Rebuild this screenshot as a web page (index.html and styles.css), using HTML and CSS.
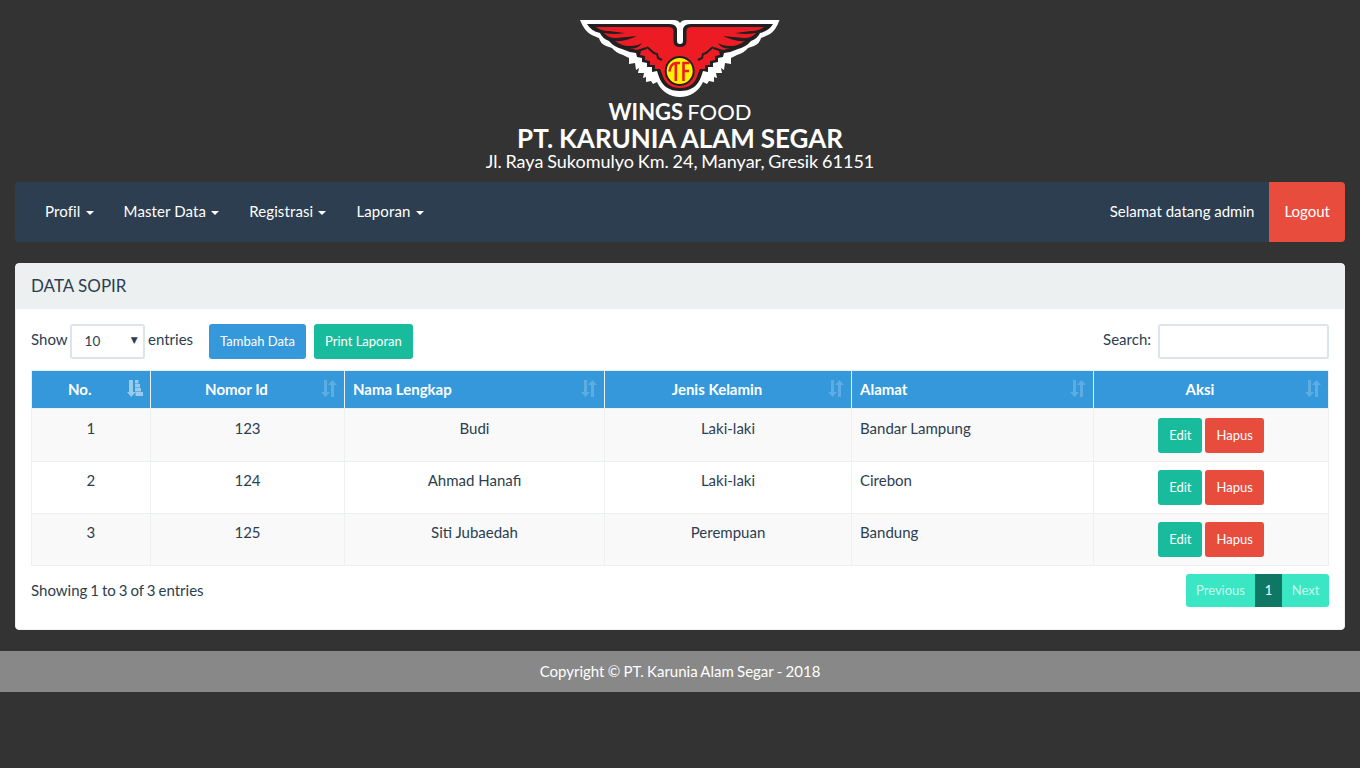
FILE: index.html
```html
<!DOCTYPE html>
<html lang="id">
<head>
<meta charset="utf-8">
<title>Data Sopir</title>
<link rel="stylesheet" href="styles.css">
</head>
<body>
<svg width="0" height="0" class="defs">
  <symbol id="sort" viewBox="0 0 16 17"><path d="M3 0h3v12h3l-4.500 5L0 12h3zM10 17V5H7l4.500-5L16 5h-3v12z"/></symbol>
  <symbol id="sort-asc" viewBox="0 0 16 17"><path d="M2 0h4v12h2.500L4.300 17 0 12h2zM8 0h3.500v3.600H8zM8 4h5v3.600H8zM8 8h6v3.600H8zM8.500 12H16v4H8.500z"/></symbol>
</svg>
<header class="brand">
  <svg class="logo" viewBox="0 0 200 77" width="200" height="77">
    <path fill="#fff" d="M0 0H94Q98 0 100 3Q102 0 106 0H199.500Q196 10 190 14Q184 17 181 18Q180 23 174 26L168 28Q164 33 157 35L151 38V44L145 43L144 50L141 48L142 53L136 53L137 58L134 57V62L129 61L127 64L123 62C119 71 110 77 100 77S81 71 77 62L73 64L71 61L66 62V57L63 58L64 53L58 53L59 48L56 50L55 43L49 44V38L43 35Q36 33 32 28L26 26Q20 23 19 18Q16 17 10 14Q4 10 0 0Z"/>
    <g id="wings">
      <path fill="#231f20" d="M100 24Q97 24 97 21V9Q96 4 89 4H7Q11 11 20 13Q22 18 29 21Q34 27 42 29Q48 32 56 33L57 37L62 38L62 42L67 43L67 47L72 47L72 52L77 51L79 57Q84 71 100 71Z"/>
      <path fill="#ed1c24" d="M100 27Q93.500 27 93.500 21V11Q93.500 7 88 7H16Q21 11 29 11L45 13Q34 15 24 13Q28 18 36 18L57 16Q45 22 35 21Q42 26 49 26Q58 26 62 23Q58 30 49 28L57 30L66 27L67 29L61 31L60 35L65 36L65 40L70 41L70 45L75 45L75 49L80 49L82 54Q86 68 100 68Z"/>
      <path fill="none" stroke="#231f20" stroke-width="2" d="M67 27L74 33L77 34L78 38L82 40"/>
    </g>
    <use href="#wings" transform="matrix(-1 0 0 1 200 0)"/>
    <circle cx="99.700" cy="51" r="14" fill="#fff200" stroke="#231f20" stroke-width="2"/>
    <path d="M89.500 51.500Q90.500 43.500 96 43H100M95.800 43V61M103.500 61V43H109.500M103.500 51H109" fill="none" stroke="#ed1c24" stroke-width="2.600"/>
  </svg>
  <div class="line-brand"><b>WINGS</b> FOOD</div>
  <div class="line-company">PT. KARUNIA ALAM SEGAR</div>
  <div class="line-address">Jl. Raya Sukomulyo Km. 24, Manyar, Gresik 61151</div>
</header>
<nav class="navbar">
  <a class="nav-link menu">Profil <i class="caret"></i></a>
  <a class="nav-link menu">Master Data <i class="caret"></i></a>
  <a class="nav-link menu">Registrasi <i class="caret"></i></a>
  <a class="nav-link menu">Laporan <i class="caret"></i></a>
  <span class="nav-link welcome">Selamat datang admin</span>
  <a class="nav-link logout">Logout</a>
</nav>
<main class="panel">
  <div class="panel-heading">DATA SOPIR</div>
  <div class="panel-body">
    <div class="toolbar">
      <span class="label">Show</span>
      <span class="length">10<i>▼</i></span>
      <span class="label">entries</span>
      <a class="btn blue add">Tambah Data</a>
      <a class="btn green print">Print Laporan</a>
      <label class="search label" for="search">Search:</label>
      <input id="search" class="search-input" type="text">
    </div>
    <table class="grid">
      <colgroup><col class="c1"><col class="c2"><col class="c3"><col class="c4"><col class="c5"><col class="c6"></colgroup>
      <thead>
        <tr>
          <th>No.<svg class="sort active"><use href="#sort-asc"/></svg></th>
          <th>Nomor Id<svg class="sort"><use href="#sort"/></svg></th>
          <th class="left">Nama Lengkap<svg class="sort"><use href="#sort"/></svg></th>
          <th>Jenis Kelamin<svg class="sort"><use href="#sort"/></svg></th>
          <th class="left">Alamat<svg class="sort"><use href="#sort"/></svg></th>
          <th>Aksi<svg class="sort"><use href="#sort"/></svg></th>
        </tr>
      </thead>
      <tbody>
        <tr><td>1</td><td>123</td><td>Budi</td><td>Laki-laki</td><td class="left">Bandar Lampung</td><td><div class="actions"><a class="btn green">Edit</a><a class="btn red">Hapus</a></div></td></tr>
        <tr><td>2</td><td>124</td><td>Ahmad Hanafi</td><td>Laki-laki</td><td class="left">Cirebon</td><td><div class="actions"><a class="btn green">Edit</a><a class="btn red">Hapus</a></div></td></tr>
        <tr><td>3</td><td>125</td><td>Siti Jubaedah</td><td>Perempuan</td><td class="left">Bandung</td><td><div class="actions"><a class="btn green">Edit</a><a class="btn red">Hapus</a></div></td></tr>
      </tbody>
    </table>
    <div class="table-foot">
      <span class="info">Showing 1 to 3 of 3 entries</span>
      <div class="pages"><a class="prev">Previous</a><a class="current">1</a><a class="next">Next</a></div>
    </div>
  </div>
</main>
<footer class="footer">Copyright © PT. Karunia Alam Segar - 2018</footer>
</body>
</html>
```
FILE: styles.css
```css
* { box-sizing: border-box; }
body { margin: 0; background: #333; color: #2c3e50; font: 15px/21px Lato, sans-serif; }
.defs { display: none; }

.brand { height: 182px; padding-top: 20px; display: flex; flex-direction: column; align-items: center; color: #fff; white-space: nowrap; }
.logo { display: block; flex: none; }
.line-brand { font-size: 22px; line-height: 29px; word-spacing: -1.5px; }
.line-company { font-size: 26px; line-height: 24px; font-weight: 700; word-spacing: -.5px; }
.line-address { font-size: 18px; line-height: 22px; word-spacing: -.8px; }

.navbar { display: flex; height: 60px; margin: 0 15px 21px; padding-left: 15px; background: #2c3e50; border-radius: 4px; overflow: hidden; }
.nav-link { padding: 19px 15px; color: #fff; white-space: nowrap; }
.menu { letter-spacing: .1px; }
.caret { display: inline-block; margin-left: 1.3px; vertical-align: middle; border-top: 4px solid #fff; border-left: 4px solid transparent; border-right: 4px solid transparent; }
.welcome { margin-left: auto; }
.logout { background: #e74c3c; }

.panel { height: 367px; margin: 0 15px 21px; background: #fff; border: 1px solid #ecf0f1; border-radius: 4px; }
.panel-heading { height: 45px; padding: 11px 15px; background: #ecf0f1; font-size: 17px; }
.panel-body { padding: 15px; }
.toolbar { display: flex; height: 35px; }
.label { line-height: 31px; }
.length { display: flex; justify-content: space-between; width: 75px; height: 35px; margin: 0 3.500px 0 2px; padding: 0 5px 0 13px; border: 2px solid #dce4ec; border-radius: 3px; font-size: 13.5px; line-height: 31px; }
.length i { font: normal 9px/29px "DejaVu Sans", sans-serif; }
.btn { display: inline-block; height: 35px; padding: 0 11px; border-radius: 3px; color: #fff; font-size: 13px; line-height: 35px; white-space: nowrap; }
.blue { background: #3498db; }
.green { background: #18bc9c; }
.red { background: #e74c3c; }
.add { margin: 0 8px 0 16px; }
.print { width: 99px; }
.search { margin-left: auto; }
.search-input { width: 171px; height: 35px; margin-left: 7px; border: 2px solid #dce4ec; border-radius: 3px; background: #fff; }

.grid { width: 1297.5px; margin: 11px 0 0 -.5px; table-layout: fixed; border-collapse: collapse; }
.c1 { width: 119.5px; }
.c2 { width: 194px; }
.c3 { width: 260px; }
.c4 { width: 247px; }
.c5 { width: 242px; }
.c6 { width: 235px; }
.grid th, .grid td { border: 1px solid #ecf0f1; padding: 8px; text-align: center; vertical-align: top; }
.grid th { position: relative; height: 38px; padding-right: 30px; background: #3498db; color: #fff; font-weight: 700; }
.grid .left { text-align: left; }
.grid tbody tr { height: 52px; }
.grid tbody tr:first-child { height: 53px; }
.grid tbody tr:first-child td { padding-top: 9px; }
.grid tbody tr:nth-child(odd) { background: #f9f9f9; }
.sort { position: absolute; right: 7px; top: 9px; width: 16px; height: 17px; fill: #fff; opacity: .2; }
.sort.active { opacity: .5; }
.actions { display: flex; justify-content: center; gap: 3px; }

.table-foot { display: flex; justify-content: space-between; padding-top: 8px; }
.info { padding-top: 6px; word-spacing: -.85px; }
.pages { display: flex; height: 33px; border-radius: 3px; overflow: hidden; background: #3be6c4; color: #c4f8ed; font-size: 13px; line-height: 33px; text-align: center; }
.prev { width: 69px; }
.current { width: 27px; background: #0f7864; color: #fff; }
.next { width: 47px; }

.footer { height: 41px; background: #888; color: #fff; line-height: 41px; text-align: center; word-spacing: -.6px; }
```
